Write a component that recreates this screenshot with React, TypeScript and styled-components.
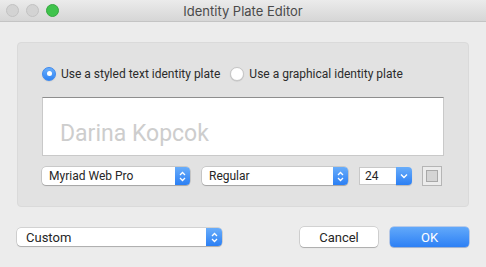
import styled, { createGlobalStyle } from "styled-components";

const GlobalStyle = createGlobalStyle`
  html, body {
    margin: 0;
    padding: 0;
    background: #ececec;
  }
  * {
    box-sizing: border-box;
  }
`;

const Window = styled.div`
  width: 486px;
  height: 267px;
  display: flex;
  flex-direction: column;
  background: #ececec;
  font-family: Roboto, "Liberation Sans", sans-serif;
  font-size: 12px;
  color: #262626;
  overflow: hidden;
`;

const TitleBar = styled.div`
  height: 22px;
  display: grid;
  grid-template-columns: 1fr auto 1fr;
  align-items: center;
  padding: 0 6px;
  background: linear-gradient(#ebebeb, #d6d6d6);
  border-bottom: 1px solid #c4c4c4;
`;

const Lights = styled.div`
  display: flex;
  gap: 7px;
`;

const Light = styled.span<{ color: string; edge: string }>`
  width: 13px;
  height: 13px;
  border-radius: 50%;
  background: ${({ color }) => color};
  border: 1px solid ${({ edge }) => edge};
`;

const Title = styled.div`
  font-family: Inter, "Liberation Sans", sans-serif;
  font-size: 13px;
  color: #4a4a4a;
`;

const Content = styled.div`
  flex: 1;
  display: flex;
  flex-direction: column;
  padding: 20px 17px 0 17px;
`;

const Panel = styled.div`
  height: 165px;
  display: flex;
  flex-direction: column;
  padding: 22px 24px 0 24px;
  background: #e2e2e2;
  border: 1px solid #dadada;
  border-radius: 4px;
`;

const RadioRow = styled.div`
  height: 17px;
  display: flex;
  align-items: center;
  gap: 10px;
`;

const RadioLabel = styled.label`
  display: flex;
  align-items: center;
  gap: 5px;
  color: #2b2b2b;
`;

const RadioDot = styled.span<{ checked?: boolean }>`
  width: 14px;
  height: 14px;
  border-radius: 50%;
  display: flex;
  align-items: center;
  justify-content: center;
  background: ${({ checked }) =>
    checked ? "linear-gradient(#6aaefb, #2f84f5)" : "#ffffff"};
  border: 1px solid ${({ checked }) => (checked ? "#3c88ee" : "#c6c6c6")};
  box-shadow: 0 0.5px 1px rgba(0, 0, 0, 0.15);

  &::after {
    content: "";
    display: ${({ checked }) => (checked ? "block" : "none")};
    width: 5px;
    height: 5px;
    border-radius: 50%;
    background: #fff;
  }
`;

const PlateBox = styled.div`
  margin-top: 15px;
  height: 59px;
  display: flex;
  align-items: flex-end;
  padding: 0 0 8px 17px;
  background: #ffffff;
  border: 1px solid #c9c9c9;
  border-top-color: #8e8e8e;
  font-size: 23px;
  color: #cdcdcd;
`;

const ControlRow = styled.div`
  margin-top: 10px;
  display: flex;
  align-items: center;
`;

const Popup = styled.div<{ width: number; mr?: number; pad?: number }>`
  width: ${({ width }) => width}px;
  height: 18px;
  margin-right: ${({ mr }) => mr || 0}px;
  display: flex;
  align-items: center;
  justify-content: space-between;
  padding-left: ${({ pad }) => pad || 7}px;
  background: #ffffff;
  border-radius: 4px;
  box-shadow: 0 0 0 0.5px rgba(0, 0, 0, 0.22), 0 1px 1px rgba(0, 0, 0, 0.18);
  overflow: hidden;
`;

const Stepper = styled.span<{ w?: number }>`
  width: ${({ w }) => w || 15}px;
  height: 100%;
  display: flex;
  align-items: center;
  justify-content: center;
  background: linear-gradient(#69adfa, #2b7ff4);
`;

const Combo = styled.div`
  width: 53px;
  height: 18px;
  margin-left: 11px;
  display: flex;
  align-items: stretch;
`;

const ComboField = styled.div`
  flex: 1;
  display: flex;
  align-items: center;
  padding-left: 5px;
  background: #fff;
  border: 1px solid #c8c8c8;
  border-right: none;
`;

const ComboButton = styled.span`
  width: 16px;
  display: flex;
  align-items: center;
  justify-content: center;
  border-radius: 0 4px 4px 0;
  background: linear-gradient(#69adfa, #2b7ff4);
  box-shadow: 0 1px 1px rgba(0, 0, 0, 0.18);
`;

const ColorWell = styled.div`
  width: 20px;
  height: 20px;
  margin-left: 10px;
  display: flex;
  align-items: center;
  justify-content: center;
  background: #ececec;
  border: 1px solid #b5b5b5;

  &::after {
    content: "";
    width: 10px;
    height: 10px;
    background: #d4d4d4;
    border: 1px solid #a8a8a8;
  }
`;

const Footer = styled.div`
  margin-top: 20px;
  display: flex;
  align-items: center;
  font-size: 13px;
`;

const Spacer = styled.div`
  flex: 1;
`;

const PushButton = styled.button<{ primary?: boolean; width: number }>`
  width: ${({ width }) => width}px;
  height: 20px;
  margin-left: 12px;
  font-family: inherit;
  font-size: 13px;
  border: none;
  border-radius: 4px;
  color: ${({ primary }) => (primary ? "#ffffff" : "#262626")};
  background: ${({ primary }) =>
    primary ? "linear-gradient(#62a9fa, #2d80f5)" : "#ffffff"};
  box-shadow: ${({ primary }) =>
    primary
      ? "0 0 0 0.5px rgba(30, 100, 220, 0.5), 0 1px 1px rgba(0, 0, 0, 0.15)"
      : "0 0 0 0.5px rgba(0, 0, 0, 0.22), 0 1px 1px rgba(0, 0, 0, 0.18)"};
  padding: 0;
`;

const UpDown = () => (
  <svg width="7" height="11" viewBox="0 0 7 11" fill="none">
    <path d="M1 4 L3.5 1.5 L6 4" stroke="#fff" strokeWidth="1.3" />
    <path d="M1 7 L3.5 9.5 L6 7" stroke="#fff" strokeWidth="1.3" />
  </svg>
);

const Down = () => (
  <svg width="8" height="6" viewBox="0 0 8 6" fill="none">
    <path d="M1 1.5 L4 4.5 L7 1.5" stroke="#fff" strokeWidth="1.4" />
  </svg>
);

export default function App() {
  return (
    <>
      <GlobalStyle />
      <Window>
        <TitleBar>
          <Lights>
            <Light color="#d3d3d3" edge="#c2c2c2" />
            <Light color="#d3d3d3" edge="#c2c2c2" />
            <Light color="#3fc34c" edge="#35a83f" />
          </Lights>
          <Title>Identity Plate Editor</Title>
          <div />
        </TitleBar>
        <Content>
          <Panel>
            <RadioRow>
              <RadioLabel>
                <RadioDot checked />
                Use a styled text identity plate
              </RadioLabel>
              <RadioLabel>
                <RadioDot />
                Use a graphical identity plate
              </RadioLabel>
            </RadioRow>
            <PlateBox>Darina Kopcok</PlateBox>
            <ControlRow>
              <Popup width={148} mr={12}>
                Myriad Web Pro
                <Stepper>
                  <UpDown />
                </Stepper>
              </Popup>
              <Popup width={146}>
                Regular
                <Stepper>
                  <UpDown />
                </Stepper>
              </Popup>
              <Combo>
                <ComboField>24</ComboField>
                <ComboButton>
                  <Down />
                </ComboButton>
              </Combo>
              <ColorWell />
            </ControlRow>
          </Panel>
          <Footer>
            <Popup width={205} pad={9}>
              Custom
              <Stepper w={16}>
                <UpDown />
              </Stepper>
            </Popup>
            <Spacer />
            <PushButton width={78}>Cancel</PushButton>
            <PushButton width={79} primary>
              OK
            </PushButton>
          </Footer>
        </Content>
      </Window>
    </>
  );
}
